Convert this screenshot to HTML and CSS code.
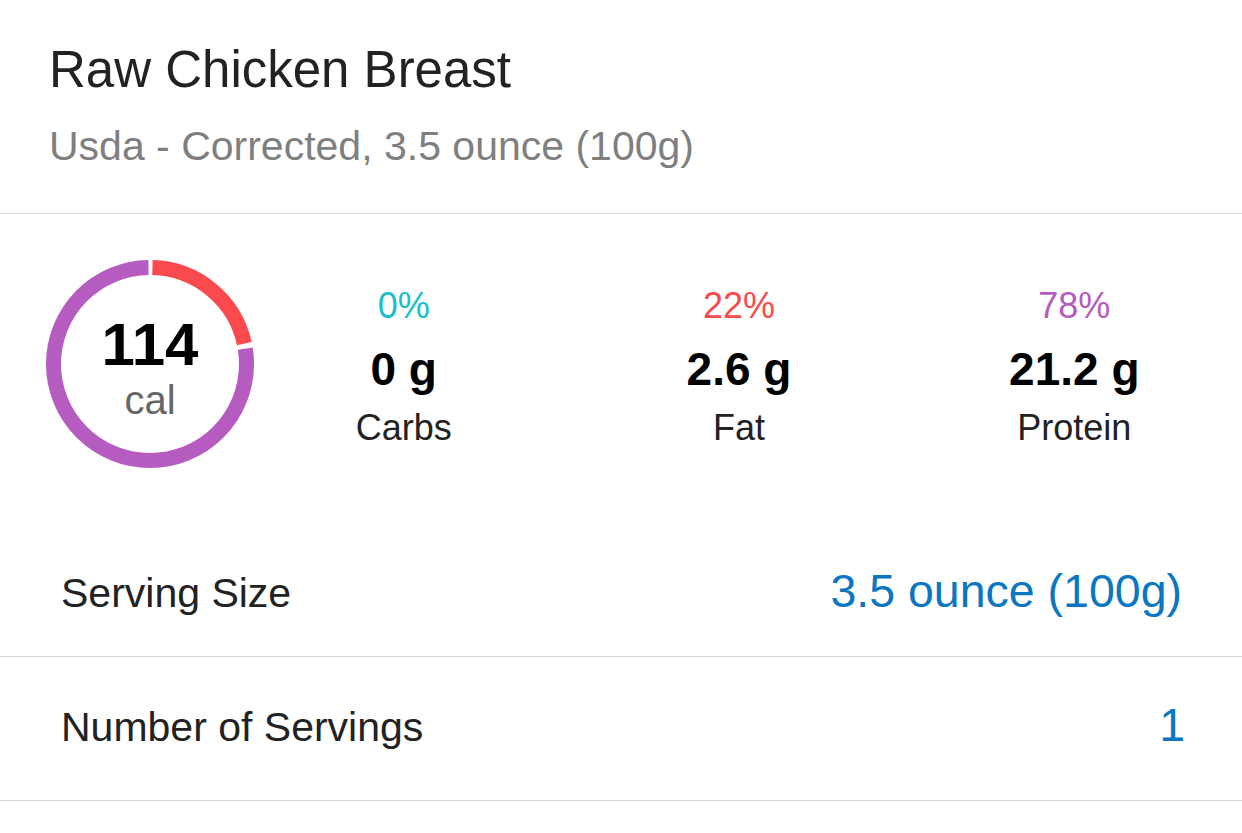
FILE: index.html
```html
<!DOCTYPE html>
<html>
<head>
<meta charset="utf-8">
<link rel="stylesheet" href="styles.css">
</head>
<body>
<div class="page">
  <header class="header">
    <h1 class="title">Raw Chicken Breast</h1>
    <p class="subtitle">Usda - Corrected, 3.5 ounce (100g)</p>
  </header>
  <section class="summary">
    <div class="ring">
      <svg class="ring-svg" width="208" height="208" viewBox="0 0 208 208">
        <g transform="rotate(-90 104 104)">
          <circle cx="104" cy="104" r="96.5" fill="none" stroke="#fa4a4d" stroke-width="15" stroke-dasharray="128.3 606.3" stroke-dashoffset="-2.5"/>
          <circle cx="104" cy="104" r="96.5" fill="none" stroke="#b65bbf" stroke-width="15" stroke-dasharray="467.9 606.3" stroke-dashoffset="-135.9"/>
        </g>
      </svg>
      <div class="ring-text">
        <div class="cal-num">114</div>
        <div class="cal-unit">cal</div>
      </div>
    </div>
    <div class="macros">
      <div class="macro">
        <div class="pct pct-carbs">0%</div>
        <div class="grams">0 g</div>
        <div class="macro-label">Carbs</div>
      </div>
      <div class="macro">
        <div class="pct pct-fat">22%</div>
        <div class="grams">2.6 g</div>
        <div class="macro-label">Fat</div>
      </div>
      <div class="macro">
        <div class="pct pct-protein">78%</div>
        <div class="grams">21.2 g</div>
        <div class="macro-label">Protein</div>
      </div>
    </div>
  </section>
  <div class="row row-first">
    <span class="row-label">Serving Size</span>
    <span class="row-value">3.5 ounce (100g)</span>
  </div>
  <div class="row row-last">
    <span class="row-label">Number of Servings</span>
    <span class="row-value">1</span>
  </div>
</div>
</body>
</html>
```

FILE: styles.css
```css
html, body {
  margin: 0;
  padding: 0;
  background: #ffffff;
}

body {
  font-family: "Liberation Sans", Arial, sans-serif;
  color: #222222;
}

.page {
  width: 1242px;
}

.header {
  padding: 44px 49px 46px;
  border-bottom: 1px solid #dcdcdc;
}

.title {
  margin: 0;
  font-size: 51px;
  line-height: 1;
  font-weight: normal;
  color: #222222;
}

.subtitle {
  margin: 31px 0 0;
  font-size: 41px;
  line-height: 1;
  color: #7f7f7f;
}

.summary {
  display: flex;
  align-items: flex-start;
  padding: 46px 0 55px 46px;
}

.ring {
  position: relative;
  width: 208px;
  height: 208px;
  flex: none;
}

.ring-svg {
  display: block;
}

.ring-text {
  position: absolute;
  inset: 0;
  display: flex;
  flex-direction: column;
  align-items: center;
  padding-top: 55px;
}

.cal-num {
  font-size: 60px;
  line-height: 1;
  font-weight: bold;
  color: #000000;
}

.cal-unit {
  margin-top: 5px;
  font-size: 40px;
  line-height: 1;
  color: #666666;
}

.macros {
  flex: 1;
  margin-left: -18px;
  margin-top: 28px;
  display: grid;
  grid-template-columns: 1fr 1fr 1fr;
}

.macro {
  display: flex;
  flex-direction: column;
  align-items: center;
}

.pct {
  font-size: 36px;
  line-height: 1;
}

.pct-carbs { color: #19c0cc; }
.pct-fat { color: #fa4a4d; }
.pct-protein { color: #b65bbf; }

.grams {
  margin-top: 22px;
  font-size: 46px;
  line-height: 1;
  font-weight: bold;
  color: #000000;
}

.macro-label {
  margin-top: 18px;
  font-size: 36px;
  line-height: 1;
  color: #222222;
}

.row {
  display: flex;
  justify-content: space-between;
  align-items: baseline;
  box-sizing: border-box;
  height: 144px;
  padding: 45px 60px 0 61px;
  border-bottom: 1px solid #d6d6d6;
}

.row-first {
  height: 134px;
}

.row-last {
  padding-right: 57px;
}

.row-label {
  font-size: 41px;
  line-height: 1;
  color: #222222;
}

.row-value {
  font-size: 46.5px;
  line-height: 1;
  color: #0b77c2;
}
```
